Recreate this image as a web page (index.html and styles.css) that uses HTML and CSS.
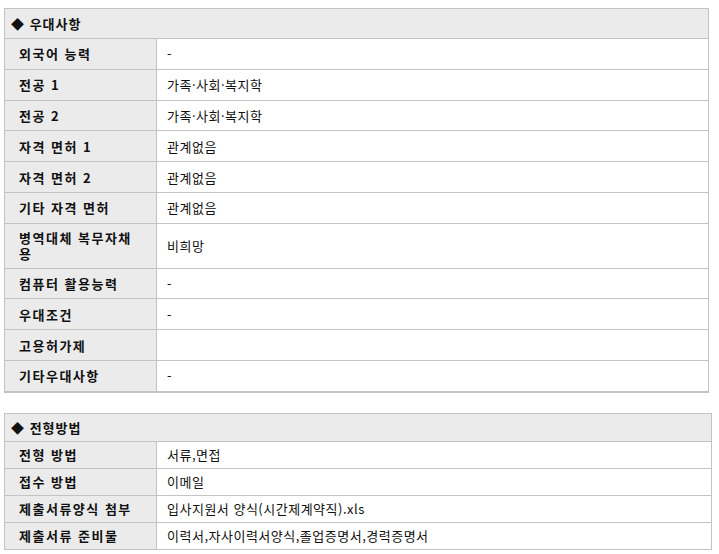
FILE: index.html
```html
<!DOCTYPE html>
<html lang="ko">
<head>
<meta charset="utf-8">
<link rel="stylesheet" href="styles.css">
</head>
<body>
<div class="page">
  <table class="info info-pref">
    <colgroup><col class="c-label"><col></colgroup>
    <tr><th class="sec" colspan="2">◆ 우대사항</th></tr>
    <tr><th>외국어 능력</th><td>-</td></tr>
    <tr><th>전공 1</th><td>가족·사회·복지학</td></tr>
    <tr><th>전공 2</th><td>가족·사회·복지학</td></tr>
    <tr><th>자격 면허 1</th><td>관계없음</td></tr>
    <tr><th>자격 면허 2</th><td>관계없음</td></tr>
    <tr><th>기타 자격 면허</th><td>관계없음</td></tr>
    <tr><th class="wrap">병역대체 복무자채용</th><td>비희망</td></tr>
    <tr><th>컴퓨터 활용능력</th><td>-</td></tr>
    <tr><th>우대조건</th><td>-</td></tr>
    <tr><th>고용허가제</th><td></td></tr>
    <tr class="last"><th>기타우대사항</th><td>-</td></tr>
  </table>

  <table class="info info-sel">
    <colgroup><col class="c-label"><col></colgroup>
    <tr><th class="sec" colspan="2">◆ 전형방법</th></tr>
    <tr><th>전형 방법</th><td>서류,면접</td></tr>
    <tr><th>접수 방법</th><td>이메일</td></tr>
    <tr><th>제출서류양식 첨부</th><td>입사지원서 양식(시간제계약직).xls</td></tr>
    <tr><th>제출서류 준비물</th><td>이력서,자사이력서양식,졸업증명서,경력증명서</td></tr>
  </table>
</div>
</body>
</html>
```

FILE: styles.css
```css
html, body {
  margin: 0;
  padding: 0;
  background: #fff;
}
body {
  font-family: "Noto Sans CJK KR", "Noto Sans", sans-serif;
  font-size: 13px;
  letter-spacing: 0.5px;
  color: #111;
}
.page {
  padding: 8px 0 0 4px;
}
.info {
  border-collapse: collapse;
  table-layout: fixed;
}
.info-pref {
  width: 705px;
  margin-bottom: 20px;
}
.info-sel {
  width: 708px;
}
.c-label {
  width: 152px;
}
.info th, .info td {
  border: 1px solid #c3c3c3;
  line-height: 15px;
  text-align: left;
  vertical-align: middle;
}
.info th {
  background: #ebebeb;
  font-weight: bold;
  letter-spacing: 1.5px;
  padding: 0 14px 0 14px;
}
.info td {
  background: #fff;
  padding: 0 10px;
  font-weight: normal;
}
.info th.sec {
  padding: 0 6px;
  letter-spacing: 1px;
}
.info-pref th, .info-pref td {
  padding-top: 7.4px;
  padding-bottom: 7.4px;
}
.info-pref th.wrap {
  line-height: 16px;
  padding-top: 6px;
  padding-bottom: 6px;
}
.info-pref th.sec {
  padding-top: 7px;
  padding-bottom: 7px;
}
.info-pref tr.last th, .info-pref tr.last td {
  border-bottom-width: 2px;
}
.info-sel th, .info-sel td {
  padding-top: 5.5px;
  padding-bottom: 5.5px;
}
.info-sel th.sec {
  padding-top: 6px;
  padding-bottom: 6px;
}
```
